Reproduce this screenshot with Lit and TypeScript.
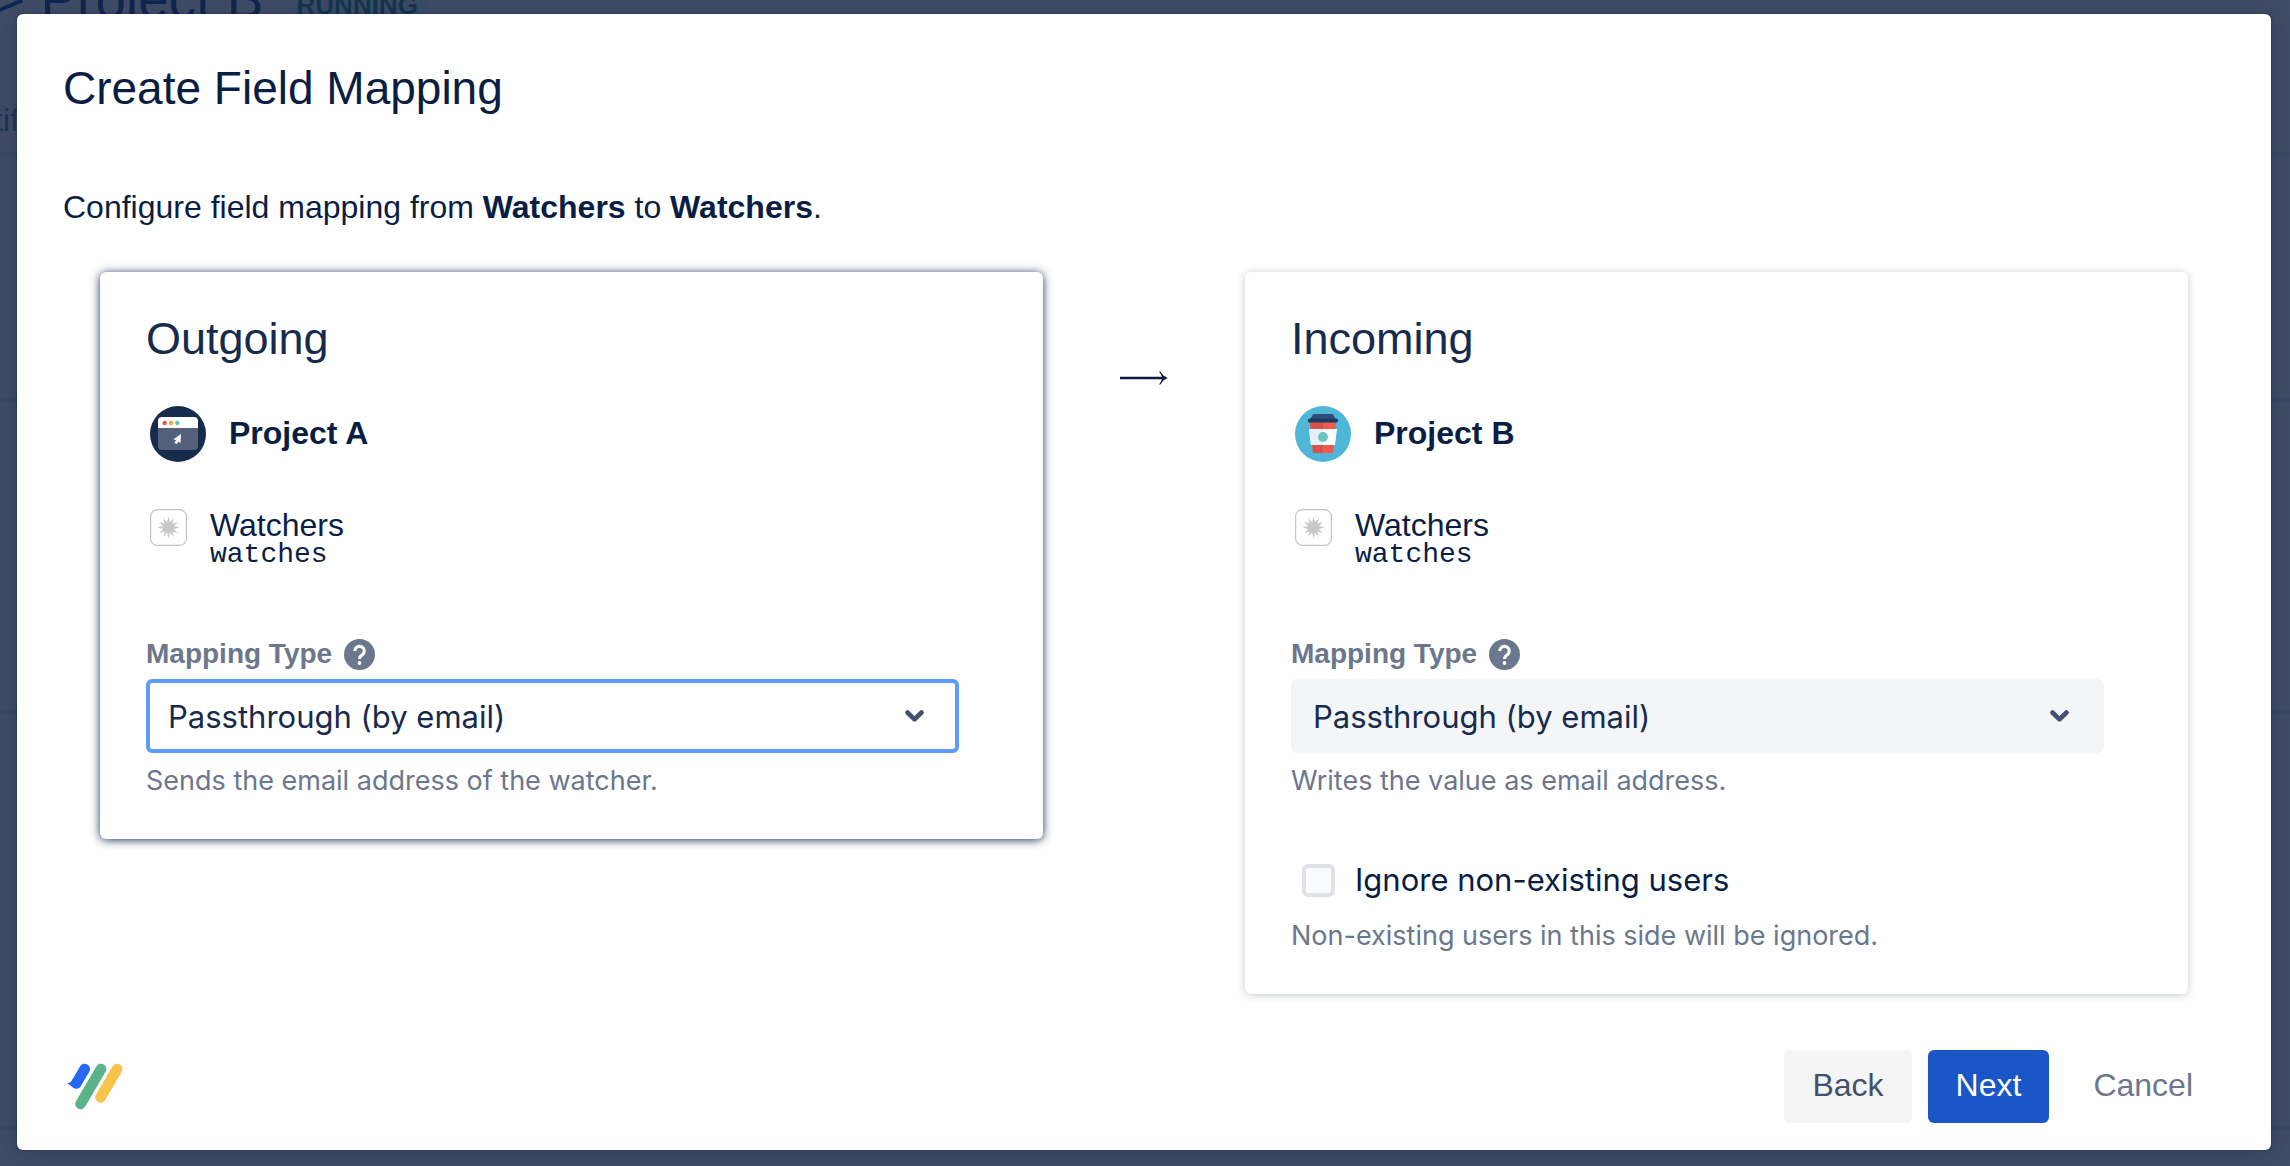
import { LitElement, html, css, svg, nothing } from "lit";
import { customElement, property } from "lit/decorators.js";

const avatarWindow = svg`<svg class="avatar" viewBox="0 0 56 56" aria-hidden="true">
  <circle cx="28" cy="28" r="28" fill="#172b4d"/>
  <path d="M8 22h40v18a4 4 0 0 1-4 4H12a4 4 0 0 1-4-4z" fill="#55617a"/>
  <path d="M8 22v-7a4 4 0 0 1 4-4h32a4 4 0 0 1 4 4v7z" fill="#fff"/>
  <circle cx="14.700" cy="17" r="2.200" fill="#ef5350"/><circle cx="21" cy="17" r="2.200" fill="#f5a93b"/><circle cx="27.300" cy="17" r="2.200" fill="#5cc4c0"/>
  <path d="M31 28l-7.500 5.300 2.500 1-1.500 2.700 2.500 1 1.300-2.600 2.200 1.600z" fill="#fff"/>
</svg>`;

const avatarCup = svg`<svg class="avatar" viewBox="0 0 56 56" aria-hidden="true">
  <circle cx="28" cy="28" r="28" fill="#4fb6d8"/>
  <path d="M15 16h26l-3 31H18z" fill="#f05a4f"/>
  <path d="M15 16h13v31H18z" fill="#d8504a"/>
  <path d="M14 23h28l-2 16H16z" fill="#fff"/>
  <path d="M14 23h14v16H16z" fill="#e3f2f3"/>
  <circle cx="28" cy="31" r="5" fill="#6cc5c3"/>
  <path d="M19 8h18q1 0 1.500 1l2 4h-25l2-4q.5-1 1.500-1z" fill="#2f4b7c"/>
  <rect x="13" y="12.500" width="30" height="4" rx="1.500" fill="#1f3a5f"/>
</svg>`;

const starPoints = Array.from({ length: 24 }, (_, i) => {
  const r = i % 2 === 0 ? 11 : 5.5;
  const a = (i * Math.PI) / 12 - Math.PI / 2;
  return `${(18.5 + r * Math.cos(a)).toFixed(2)},${(18.5 + r * Math.sin(a)).toFixed(2)}`;
}).join(" ");

const fieldIcon = svg`<svg class="field-icon" viewBox="0 0 37 37" aria-hidden="true">
  <rect x=".6" y=".6" width="35.800" height="35.800" rx="7" fill="#fff" stroke="#c4c4c4" stroke-width="1.200"/>
  <polygon points=${starPoints} fill="#c8c8c8"/>
</svg>`;

const helpIcon = svg`<svg class="help-icon" viewBox="0 0 31 31" aria-hidden="true">
  <circle cx="15.500" cy="15.500" r="15.500" fill="#6b778c"/>
  <path d="M10.800 12a4.700 4.700 0 1 1 7.300 3.900c-1.700 1.100-2.600 1.700-2.600 4" fill="none" stroke="#fff" stroke-width="3"/>
  <circle cx="15.500" cy="24" r="1.900" fill="#fff"/>
</svg>`;

const chevron = svg`<svg class="chevron" viewBox="0 0 19 12" aria-hidden="true">
  <path d="M2.500 2.500l7 6.800 7-6.800" fill="none" stroke="#42526e" stroke-width="4.600" stroke-linecap="round" stroke-linejoin="round"/>
</svg>`;

const longArrow = svg`<svg class="arrow" viewBox="0 0 48 18" role="img" aria-label="to">
  <path d="M0 9h46" fill="none" stroke="#091e42" stroke-width="2.400"/>
  <path d="M39 2.500C41 5.500 42 7 42 9s-1 3.500-3 6.500h1.500C42.500 12 44.500 10 48 9c-3.500-1-5.500-3-7.500-6.500z" fill="#091e42"/>
</svg>`;

const logo = svg`<svg class="logo" viewBox="0 0 56 48" role="img" aria-label="Logo">
  <g fill="none" stroke-width="10.600" stroke-linecap="round">
    <path d="M34 6L13.500 41" stroke="#5cb38a"/>
    <path d="M50.200 6L33.500 34.500" stroke="#f8c44c"/>
    <path d="M17.700 6L9.500 20" stroke="#2468f5"/>
  </g>
  <path d="M0 20.500c3-.500 4.500-2 6-4.500l8 7c-2 3-5 3-7 2.200C4.500 24 3 21.500 0 20.500z" fill="#2468f5"/>
</svg>`;

@customElement("mapping-card")
export class MappingCard extends LitElement {
  @property() heading = "";
  @property() project = "";
  @property() hint = "";
  @property({ attribute: false }) avatar: unknown = nothing;
  @property({ type: Boolean, reflect: true }) active = false;

  static styles = css`
    :host {
      display: block;
      box-sizing: border-box;
      padding: 39px 46px 40px;
      border-radius: 6px;
      background: #fff;
      color: #091e42;
      box-shadow: 0 1px 8px rgba(9, 30, 66, 0.24);
    }
    :host([active]) {
      box-shadow: 0 1px 10px rgba(9, 30, 66, 0.9);
    }
    h2 {
      margin: 0;
      font-size: 45px;
      line-height: 56px;
      font-weight: 400;
      color: #172b4d;
    }
    .project {
      display: flex;
      align-items: center;
      gap: 23px;
      margin-top: 39px;
      padding-left: 4px;
      font-size: 32px;
      line-height: 54px;
      font-weight: 700;
    }
    .project span {
      padding-bottom: 2px;
    }
    .avatar {
      width: 56px;
      height: 56px;
    }
    .field {
      display: flex;
      gap: 23px;
      margin-top: 45px;
      padding-left: 4px;
      font-size: 32px;
      line-height: 36px;
    }
    .field-icon {
      width: 37px;
      height: 37px;
      margin-top: 2px;
    }
    code {
      display: block;
      font-family: "Liberation Mono", monospace;
      font-size: 28px;
      line-height: 24px;
    }
    .label {
      display: flex;
      align-items: center;
      gap: 12px;
      margin-top: 71px;
      font-size: 28px;
      line-height: 32px;
      font-weight: 700;
      color: #6b778c;
    }
    .help {
      display: flex;
      padding: 0;
      border: 0;
      background: none;
    }
    .help-icon {
      width: 31px;
      height: 31px;
    }
    .control {
      display: grid;
      align-items: center;
      margin: 9px 38px 0 0;
    }
    select {
      grid-area: 1 / 1;
      appearance: none;
      width: 100%;
      height: 74px;
      padding: 0 18px;
      border: 4px solid #f4f5f7;
      border-radius: 6px;
      outline: none;
      background: #f4f5f7;
      color: #172b4d;
      font: 400 31px "Inter", sans-serif;
    }
    :host([active]) select {
      border-color: #5c9cff;
      background: #fff;
    }
    .chevron {
      grid-area: 1 / 1;
      justify-self: end;
      width: 19px;
      height: 12px;
      margin-right: 35px;
      pointer-events: none;
    }
    .hint {
      margin: 10px 0 0;
      font: 400 27px/36px "Inter", sans-serif;
      color: #6b778c;
    }
  `;

  render() {
    return html`
      <h2>${this.heading}</h2>
      <div class="project">${this.avatar}<span>${this.project}</span></div>
      <div class="field">
        ${fieldIcon}
        <div>Watchers<code>watches</code></div>
      </div>
      <div class="label">
        <label for="type">Mapping Type</label>
        <button class="help" type="button" aria-label="Help">${helpIcon}</button>
      </div>
      <div class="control">
        <select id="type"><option>Passthrough (by email)</option></select>
        ${chevron}
      </div>
      <p class="hint">${this.hint}</p>
      <slot></slot>
    `;
  }
}

@customElement("app-root")
export class AppRoot extends LitElement {
  static styles = css`
    :host {
      display: grid;
      box-sizing: border-box;
      min-height: 100vh;
      overflow: hidden;
      background: #3f4c66;
      font-family: "Liberation Sans", Arial, sans-serif;
      color: #091e42;
    }
    .page {
      grid-area: 1 / 1;
      height: 100vh;
      overflow: hidden;
      color: #10264d;
    }
    .page-title {
      display: flex;
      gap: 23px;
      height: 29px;
      margin: -5px 0 0 -7px;
      font-size: 55px;
      line-height: 8px;
      white-space: nowrap;
    }
    .status {
      padding: 0 10px;
      background: #3a4c66;
      color: #16344c;
      font-size: 26px;
      line-height: 20px;
      font-weight: 700;
    }
    .page-tab {
      height: 52px;
      margin-left: -6px;
      padding-top: 76px;
      border-bottom: 5px solid #3a4964;
      color: #1f3457;
      font-size: 32px;
      line-height: 40px;
    }
    .page-row {
      height: 241px;
      border-bottom: 4px solid #394862;
    }
    .page-row.tall {
      height: 308px;
    }
    .page-row.last {
      height: 412px;
    }
    .dialog {
      grid-area: 1 / 1;
      position: relative;
      display: flex;
      flex-direction: column;
      box-sizing: border-box;
      margin: 14px 19px 16px 17px;
      padding: 46px 78px 27px 46px;
      border-radius: 6px;
      background: #fff;
      box-shadow: 0 0 2px rgba(9, 30, 66, 0.5), 0 4px 24px rgba(9, 30, 66, 0.2);
    }
    h1 {
      margin: 0;
      font-size: 46px;
      line-height: 56px;
      font-weight: 400;
    }
    .intro {
      margin: 71px 0 0;
      font-size: 32px;
      line-height: 40px;
    }
    .cards {
      display: grid;
      grid-template-columns: minmax(0, 1fr) 202px minmax(0, 1fr);
      align-items: start;
      margin: 45px 5px 0 37px;
    }
    .arrow {
      justify-self: center;
      width: 48px;
      height: 18px;
      margin-top: 97px;
    }
    .check {
      display: flex;
      align-items: center;
      gap: 20px;
      margin-top: 61px;
      padding-left: 11px;
      font: 400 31px/40px "Inter", sans-serif;
    }
    .check input {
      appearance: none;
      box-sizing: border-box;
      width: 33px;
      height: 33px;
      margin: 0;
      border: 4px solid #dfe1e6;
      border-radius: 6px;
      background: #fafbfc;
    }
    .note {
      margin: 18px 0 0;
      font: 400 27px/36px "Inter", sans-serif;
      color: #6b778c;
    }
    footer {
      display: flex;
      align-items: center;
      margin-top: auto;
      padding-left: 4px;
    }
    .logo {
      width: 56px;
      height: 48px;
      margin-right: auto;
    }
    .btn {
      height: 73px;
      padding: 0 28px 2px;
      border: 0;
      border-radius: 6px;
      background: #f5f5f5;
      color: #42526e;
      font: 400 32px "Liberation Sans", Arial, sans-serif;
    }
    .btn.primary {
      margin: 0 16px;
      background: #1b56c6;
      color: #fff;
    }
    .btn.link {
      padding-right: 0;
      background: none;
      color: #6b778c;
    }
  `;

  render() {
    return html`
      <div class="page" aria-hidden="true">
        <div class="page-title"><span>&gt; Project B</span><span class="status">RUNNING</span></div>
        <div class="page-tab">tif</div>
        <div class="page-row"></div>
        <div class="page-row tall"></div>
        <div class="page-row last"></div>
      </div>
      <section class="dialog" role="dialog" aria-labelledby="title">
        <h1 id="title">Create Field Mapping</h1>
        <p class="intro">Configure field mapping from <b>Watchers</b> to <b>Watchers</b>.</p>
        <div class="cards">
          <mapping-card
            active
            heading="Outgoing"
            project="Project A"
            hint="Sends the email address of the watcher."
            .avatar=${avatarWindow}
          ></mapping-card>
          ${longArrow}
          <mapping-card
            heading="Incoming"
            project="Project B"
            hint="Writes the value as email address."
            .avatar=${avatarCup}
          >
            <label class="check"><input type="checkbox" />Ignore non-existing users</label>
            <p class="note">Non-existing users in this side will be ignored.</p>
          </mapping-card>
        </div>
        <footer>
          ${logo}
          <button class="btn" type="button">Back</button>
          <button class="btn primary" type="button">Next</button>
          <button class="btn link" type="button">Cancel</button>
        </footer>
      </section>
    `;
  }
}
